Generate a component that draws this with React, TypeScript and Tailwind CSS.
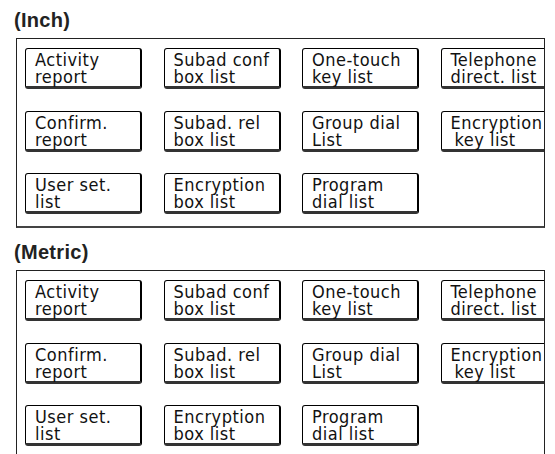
import React from "react";

type Btn = { l1: string; l2: string; indent2?: boolean } | null;

const rows: Btn[][] = [
  [
    { l1: "Activity", l2: "report" },
    { l1: "Subad conf", l2: "box list" },
    { l1: "One-touch", l2: "key list" },
    { l1: "Telephone", l2: "direct. list" },
  ],
  [
    { l1: "Confirm.", l2: "report" },
    { l1: "Subad. rel", l2: "box list" },
    { l1: "Group dial", l2: "List" },
    { l1: "Encryption", l2: "key list", indent2: true },
  ],
  [
    { l1: "User set.", l2: "list" },
    { l1: "Encryption", l2: "box list" },
    { l1: "Program", l2: "dial list" },
    null,
  ],
];

function Button({ b }: { b: Btn }) {
  if (!b) return <div className="w-[117px] h-[41px]" />;
  return (
    <div className="w-[117px] h-[41px] shrink-0 rounded-[3px] border border-black border-r-2 border-b-[3px] border-b-[#333] bg-white pl-[9px] pt-[2px] text-[#111] font-['DejaVu_Sans_Condensed','DejaVu_Sans',sans-serif] font-stretch-condensed text-[18px] leading-[17px] tracking-[0.5px] whitespace-nowrap">
      <div>{b.l1}</div>
      <div className={b.indent2 ? "pl-[4px]" : ""}>{b.l2}</div>
    </div>
  );
}

function Section({ label }: { label: string }) {
  return (
    <div className="flex flex-col">
      <div className="pl-[14px] pt-[11px] h-[30px] font-['Liberation_Sans',Arial,sans-serif] font-bold text-[20px] leading-[19px] tracking-[0.3px] text-[#222]">
        {label}
      </div>
      <div className="ml-[16px] mt-[8px] w-[529px] h-[190px] shrink-0 overflow-hidden border border-[#222] border-b-2 border-b-[#444] pl-[8px] pt-[9px] flex flex-col gap-[21.5px]">
        {rows.map((r, i) => (
          <div key={i} className="flex gap-x-[21.5px]">
            {r.map((b, j) => (
              <Button key={j} b={b} />
            ))}
          </div>
        ))}
      </div>
    </div>
  );
}

export default function App() {
  return (
    <div className="w-[555px] h-[454px] overflow-hidden bg-white flex flex-col gap-[4px]">
      <Section label="(Inch)" />
      <Section label="(Metric)" />
    </div>
  );
}
